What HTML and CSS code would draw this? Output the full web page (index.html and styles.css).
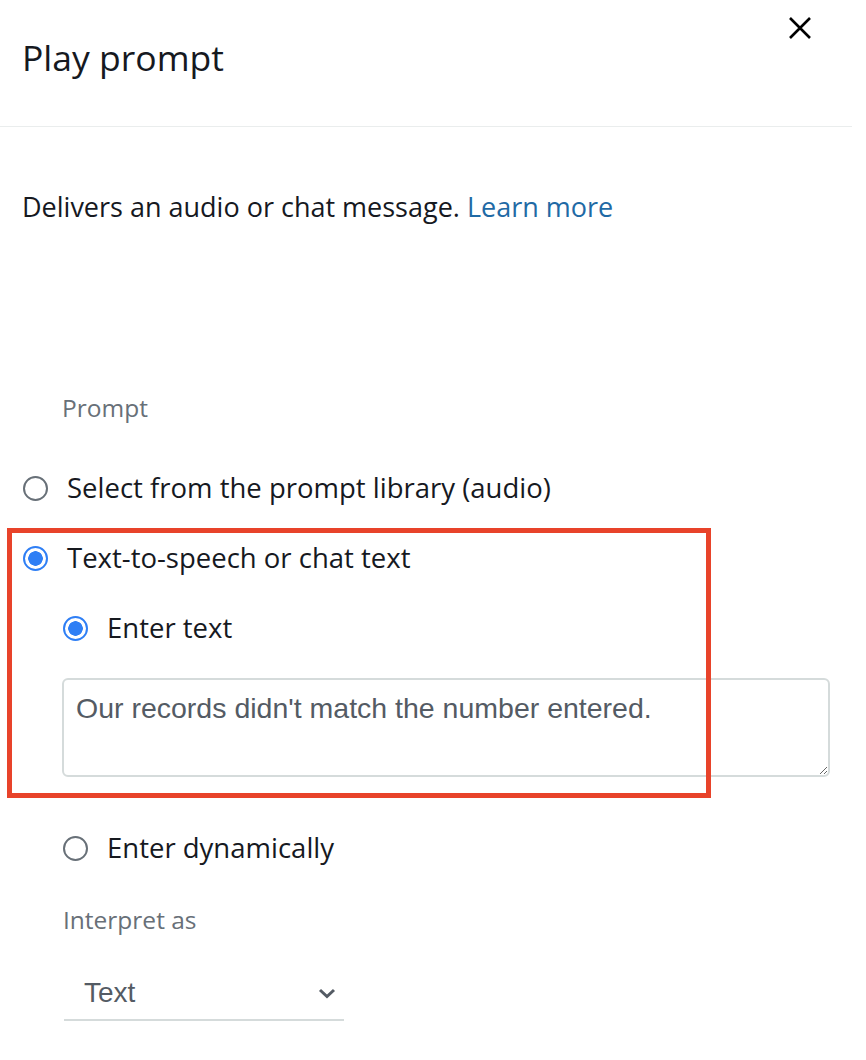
FILE: index.html
```html
<!DOCTYPE html>
<html>
<head>
<meta charset="utf-8">
<link rel="stylesheet" href="styles.css">
</head>
<body>
<div class="panel">
  <header class="header">
    <h1 class="title">Play prompt</h1>
    <button class="close" aria-label="Close">
      <svg width="24" height="24" viewBox="0 0 24 24"><path d="M2 2 L22 22 M22 2 L2 22" stroke="#000" stroke-width="2.6" fill="none"/></svg>
    </button>
  </header>
  <main class="body">
    <p class="desc">Delivers an audio or chat message. <a class="link" href="#">Learn more</a></p>
    <div class="field">
      <div class="label">Prompt</div>
      <div class="radio-row first">
        <span class="radio"></span><span class="rtext">Select from the prompt library (audio)</span>
      </div>
      <div class="radio-row">
        <span class="radio on"></span><span class="rtext">Text-to-speech or chat text</span>
      </div>
      <div class="sub">
        <div class="radio-row">
          <span class="radio on"></span><span class="rtext">Enter text</span>
        </div>
        <textarea class="ta">Our records didn't match the number entered.</textarea>
        <div class="radio-row dyn">
          <span class="radio"></span><span class="rtext">Enter dynamically</span>
        </div>
        <div class="label2">Interpret as</div>
        <div class="select">
          <span>Text</span>
          <svg width="18" height="12" viewBox="0 0 18 12"><path d="M2 3 L9 9.5 L16 3" stroke="#545b64" stroke-width="3" fill="none"/></svg>
        </div>
      </div>
    </div>
  </main>
  <div class="highlight"></div>
</div>
</body>
</html>
```
FILE: styles.css
```css
html, body {
  margin: 0;
  padding: 0;
  background: #fff;
}
.panel {
  position: relative;
  width: 852px;
  height: 1060px;
  font-family: "Open Sans", "Noto Sans", sans-serif;
  color: #16191f;
}
.header {
  display: flex;
  justify-content: space-between;
  align-items: flex-start;
  height: 127px;
  border-bottom: 1px solid #eaeded;
  padding: 0 22px;
  box-sizing: border-box;
}
.title {
  margin: 36px 0 0;
  font-size: 35.5px;
  font-weight: 400;
  line-height: 42px;
  color: #16191f;
}
.close {
  margin: 16px 18px 0 0;
  padding: 0;
  border: 0;
  background: none;
  width: 24px;
  height: 24px;
  display: flex;
}
.body {
  padding: 0 22px;
}
.desc {
  margin: 62px 0 0;
  font-size: 27px;
  line-height: 36px;
  color: #16191f;
}
.link {
  color: #1f6aa5;
  text-decoration: none;
}
.field {
  margin-top: 168px;
}
.label {
  margin-left: 40px;
  font-size: 24.5px;
  line-height: 30px;
  color: #687078;
}
.radio-row {
  display: flex;
  align-items: center;
  gap: 19px;
  height: 40px;
  margin-top: 30px;
}
.radio-row.first {
  margin-top: 45px;
}
.rtext {
  font-size: 27.5px;
  line-height: 40px;
  color: #16191f;
}
.radio {
  width: 25px;
  height: 25px;
  border-radius: 50%;
  border: 2px solid #687078;
  box-sizing: border-box;
  flex: none;
  margin-left: 1px;
}
.radio.on {
  border: 2px solid #2f7ff5;
  background: radial-gradient(circle, #2f7ff5 0 7px, #fff 7.5px);
}
.sub {
  padding-left: 40px;
}
.ta {
  display: block;
  box-sizing: border-box;
  width: 768px;
  height: 99px;
  margin-top: 30px;
  border: 2px solid #d5dbdb;
  border-radius: 6px;
  padding: 12px 12px;
  font-family: "Liberation Sans", Arial, sans-serif;
  font-size: 28.5px;
  line-height: 32px;
  color: #545b64;
  resize: vertical;
  outline: none;
}
.radio-row.dyn {
  margin-top: 51px;
}
.label2 {
  margin-top: 37px;
  font-size: 24.5px;
  line-height: 30px;
  color: #687078;
  margin-left: 1px;
}
.select {
  display: flex;
  justify-content: space-between;
  align-items: center;
  width: 280px;
  box-sizing: border-box;
  margin: 42px 0 0 2px;
  padding: 0 8px 10px 20px;
  border-bottom: 2px solid #d5dbdb;
  font-family: "Liberation Sans", Arial, sans-serif;
  font-size: 28px;
  line-height: 32px;
  color: #545b64;
}
.highlight {
  position: absolute;
  left: 7px;
  top: 528px;
  width: 704px;
  height: 270px;
  box-sizing: border-box;
  border: 5px solid #e8432a;
  pointer-events: none;
}
```
